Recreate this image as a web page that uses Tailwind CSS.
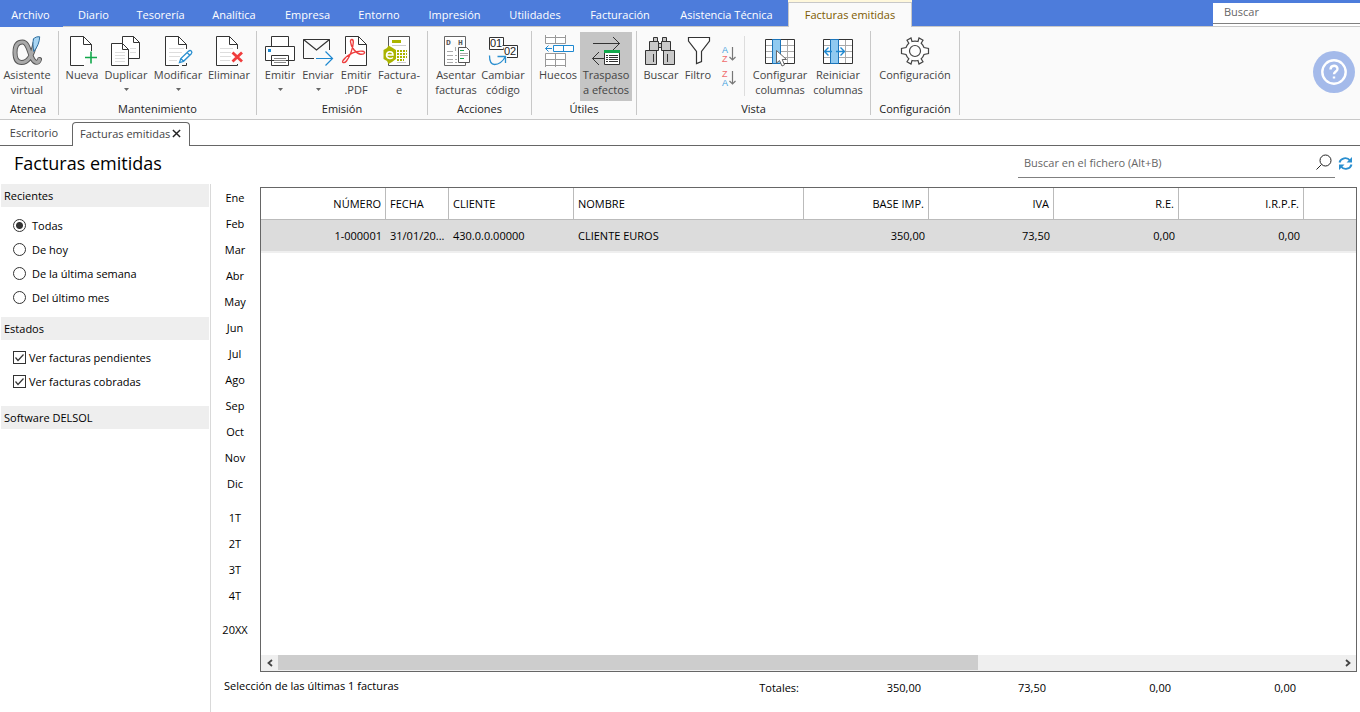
<!DOCTYPE html>
<html lang="es">
<head>
<meta charset="utf-8">
<meta name="viewport" content="width=device-width, initial-scale=1">
<title>Facturas emitidas</title>
<script src="https://cdn.jsdelivr.net/npm/@tailwindcss/browser@4"></script>
</head>
<body class="flex min-h-screen flex-col bg-white font-['Open_Sans','Noto_Sans',sans-serif] text-[11px] leading-[15px] text-black">

<header>
  <!-- Menu bar -->
  <div class="flex h-[27px] bg-[#4d7cdb] text-white">
    <button class="w-[63px] pr-[2px] pt-px">Archivo</button>
    <nav class="flex flex-1 border-b border-[#c8c8c8]">
      <button class="w-[61px] pt-[2px]">Diario</button>
      <button class="w-[73px] pt-[2px]">Tesorería</button>
      <button class="w-[74px] pt-[2px]">Analítica</button>
      <button class="w-[73px] pt-[2px]">Empresa</button>
      <button class="w-[70px] pt-[2px]">Entorno</button>
      <button class="w-[81px] pt-[2px]">Impresión</button>
      <button class="w-[80px] pt-[2px]">Utilidades</button>
      <button class="w-[90px] pt-[2px]">Facturación</button>
      <button class="w-[123px] pt-[2px]">Asistencia Técnica</button>
      <div class="h-[27px] w-[124px] bg-[#fff8dc] pt-[2px]">
        <button class="h-[25px] w-full border border-b-0 border-[#c8c8c8] bg-[#fafafa] pb-[2px] text-[#7d5a00]">Facturas emitidas</button>
      </div>
    </nav>
    <div class="w-[147px] border-b border-[#c8c8c8] pt-[3px]">
      <div class="h-[23px] bg-white">
        <input type="text" aria-label="Buscar" placeholder="Buscar" class="block h-[21px] w-full border-b border-[#808080] pl-[11px] pb-1 outline-none placeholder:text-[#666]">
      </div>
    </div>
  </div>

  <!-- Ribbon -->
  <div class="flex h-[93px] items-start border-b border-[#c8c8c8] bg-[#fafafa] text-[#444]">
    <section class="mt-1 flex h-[84px] w-[59px] flex-col justify-between border-r border-[#c8c8c8]">
      <div class="flex pt-px">
        <button class="flex h-[69px] w-[54px] flex-col items-center pt-[3px]">
          <svg class="size-8 shrink-0" viewBox="0 0 32 32" fill="none" stroke-linecap="round"><path d="M24 8C22 18 18 27.500 10.500 27.500C6 27.500 4 23.500 4 17.500C4 11 6.500 7 11.500 7C19 7 18.500 26 25 27.200C26.500 27.500 28 26.500 28.500 24.500" stroke="#555" stroke-width="5"/><path d="M24 8C22 18 18 27.500 10.500 27.500C6 27.500 4 23.500 4 17.500C4 11 6.500 7 11.500 7C19 7 18.500 26 25 27.200C26.500 27.500 28 26.500 28.500 24.500" stroke="#a9a9a9" stroke-width="3.200"/><path d="M22.500 4C24 2 26.500 1.500 28.700 1.800C28.500 7 26.500 12 22.800 16.500C22 12 21.500 7 22.500 4Z" fill="#a9d6f3" stroke="#2f6f9f"/></svg>
          <span>Asistente<br>virtual</span>
        </button>
      </div>
      <h2 class="-mb-px pr-[2px] text-center text-[#222]">Atenea</h2>
    </section>

    <section class="mt-1 flex h-[84px] w-[198px] flex-col justify-between border-r border-[#c8c8c8]">
      <div class="flex pl-[3px] pt-px">
        <button class="flex h-[69px] w-10 flex-col items-center pt-[3px]">
          <svg class="size-8 shrink-0" viewBox="0 0 32 32" fill="none" stroke="#333"><path d="M18 30.500H4.500V1.500H17.500L25.500 9.500V16" fill="#fff"/><path d="M17.500 1.500V9.500H25.500"/><path d="M25 16.500V28.500M19 22.500H31" stroke="#12a84b" stroke-width="1.600"/></svg>
          <span>Nueva</span>
        </button>
        <button class="flex h-[69px] w-12 flex-col items-center pt-[3px]">
          <svg class="size-8 shrink-0" viewBox="0 0 32 32" fill="none" stroke="#333"><path d="M12.500 1.500H23.500L29.500 7.500V23.500H12.500Z" fill="#fff"/><path d="M23.500 1.500V7.500H29.500"/><path d="M20 13.500H26M20 17.500H26" stroke="#ddd"/><path d="M1.500 8.500H12.500L18.500 14.500V30.500H1.500Z" fill="#fff"/><path d="M12.500 8.500V14.500H18.500"/><path d="M5 17.500H15M5 20.500H15M5 23.500H15M5 26.500H15" stroke="#ddd"/></svg>
          <span>Duplicar</span>
          <svg class="mt-[6px] h-[3px] w-[5px]" viewBox="0 0 5 3" fill="#666"><path d="M0 0H5L2.500 3Z"/></svg>
        </button>
        <button class="flex h-[69px] w-14 flex-col items-center pt-[3px]">
          <svg class="size-8 shrink-0" viewBox="0 0 32 32" fill="none" stroke="#333"><path d="M17 30.500H3.500V1.500H16.500L24.500 9.500V14" fill="#fff"/><path d="M16.500 1.500V9.500H24.500M20 30.500H24.500V28"/><path d="M7 13.500H22M7 17.500H20M7 21.500H18M7 25.500H15" stroke="#ddd"/><path d="M17.500 27.500L18.800 23.500L26.500 16.200C28.500 14.500 31 16.500 29.300 18.700L21.500 26.300ZM18.800 23.500L21.500 26.300M25 17.600L27.900 20.200" stroke="#2a8fd0" stroke-width="1.300" fill="#fff"/></svg>
          <span>Modificar</span>
          <svg class="mt-[6px] h-[3px] w-[5px]" viewBox="0 0 5 3" fill="#666"><path d="M0 0H5L2.500 3Z"/></svg>
        </button>
        <button class="flex h-[69px] w-[46px] flex-col items-center pt-[3px]">
          <svg class="size-8 shrink-0" viewBox="0 0 32 32" fill="none" stroke="#333"><path d="M18 30.500H3.500V1.500H16.500L24.500 9.500V14" fill="#fff"/><path d="M16.500 1.500V9.500H24.500M18 30.500H24.500V29"/><path d="M7 13.500H20M7 17.500H18M7 21.500H18M7 25.500H17" stroke="#ddd"/><path d="M19.500 17.500L29 26.500M29 17.500L19.500 26.500" stroke="#f03c3c" stroke-width="2.800"/></svg>
          <span>Eliminar</span>
        </button>
      </div>
      <h2 class="-mb-px text-center text-[#222]">Mantenimiento</h2>
    </section>

    <section class="mt-1 flex h-[84px] w-[171px] flex-col justify-between border-r border-[#c8c8c8]">
      <div class="flex pl-1 pt-px">
        <button class="flex h-[69px] w-[38px] flex-col items-center pt-[3px]">
          <svg class="size-8 shrink-0" viewBox="0 0 32 32" fill="#fff" stroke="#333"><path d="M7.500 1.500H24.500V11.500H7.500ZM1.500 11.500H30.500V25.500H1.500ZM7.500 20.500H24.500V30.500H7.500Z"/><path d="M10 23.500H22M10 25.500H22M10 27.500H22" stroke="#888"/><path d="M4 14H7V17H4Z" fill="#1e88d0" stroke="none"/></svg>
          <span>Emitir</span>
          <svg class="mt-[6px] h-[3px] w-[5px]" viewBox="0 0 5 3" fill="#666"><path d="M0 0H5L2.500 3Z"/></svg>
        </button>
        <button class="flex h-[69px] w-[38px] flex-col items-center pt-[3px]">
          <svg class="size-8 shrink-0" viewBox="0 0 32 32" fill="none" stroke="#333"><path d="M12 23.500H1.500V4.500H27.500V15"/><path d="M1.500 4.500L14.500 15L27.500 4.500" stroke-width="1.200"/><path d="M14 23.500H30M23.500 16.500L30.500 23.500L23.500 30.500" stroke="#1e88d0" stroke-width="1.200"/></svg>
          <span>Enviar</span>
          <svg class="mt-[6px] h-[3px] w-[5px]" viewBox="0 0 5 3" fill="#666"><path d="M0 0H5L2.500 3Z"/></svg>
        </button>
        <button class="flex h-[69px] w-[38px] flex-col items-center pt-[3px]">
          <svg class="size-8 shrink-0" viewBox="0 0 32 32" fill="none" stroke="#333"><path d="M5.500 19V1.500H18.500L26.500 9.500V30.500H9" fill="#fff"/><path d="M18.500 1.500V9.500H26.500"/><path d="M3 25.500C1.500 28 4.500 28.500 6.500 26C10 21.500 13 13 13.300 7.500C13.500 3.800 10.300 3.500 10.500 6.800C10.800 12 16 18.500 20.500 19.200C25 19.700 26 16.500 22.500 16.200C17 15.700 8.500 18 3 25.500Z" stroke="#ee3f3f" stroke-width="1.400"/></svg>
          <span>Emitir<br>.PDF</span>
        </button>
        <button class="flex h-[69px] w-12 flex-col items-center pt-[3px]">
          <svg class="size-8 shrink-0" viewBox="0 0 32 32" fill="none"><path d="M5.500 1.500H26.500V30.500H5.500Z" fill="#fff" stroke="#555"/><path d="M9 10.500H23M14 27.500H23" stroke="#ccc"/><path d="M9 5H18V8H9Z" fill="#aab400"/><path d="M5.500 10.500L9 12.500L13 15V24L9 27L5.500 29L4 26L.5 24V15L4 13Z" fill="#aab400"/><path d="M3.500 20H10C10 16 4 15.500 3.500 20C3.500 23.500 7.500 24.500 10 22.500" stroke="#fff" stroke-width="1.500"/><path d="M14 16H24M14 19H24M14 22H24M14 25H21" stroke="#aab400" stroke-width="2" stroke-dasharray="2 1"/></svg>
          <span>Factura-<br>e</span>
        </button>
      </div>
      <h2 class="-mb-px text-center text-[#222]">Emisión</h2>
    </section>

    <section class="mt-1 flex h-[84px] w-[104px] flex-col justify-between border-r border-[#c8c8c8]">
      <div class="flex pl-[3px] pt-px">
        <button class="flex h-[69px] w-[50px] flex-col items-center pt-[3px]">
          <svg class="size-8 shrink-0" viewBox="0 0 32 32" fill="none"><path d="M4.500 1.500H25.500V12M25.500 28V30.500H4.500V1.500" fill="#fff" stroke="#666"/><text x="6" y="10" font-family="Liberation Mono, monospace" font-size="8" font-weight="bold" fill="#555">D</text><text x="18" y="10" font-family="Liberation Mono, monospace" font-size="8" font-weight="bold" fill="#555">H</text><path d="M7 16.500H13M7 20.500H13M7 24.500H13M7 27.500H13M15 20.500H17M15 24.500H17M15 27.500H17" stroke="#aaa"/><path d="M15.500 12V16" stroke="#aaa"/><path d="M18.500 12.500H26.500L29.500 15.500V27.500H18.500Z" fill="#fff" stroke="#555"/><path d="M20 15.500H24M20 23.500H24" stroke="#12a84b"/><path d="M20 18.500H28M20 20.500H28" stroke="#aaa"/></svg>
          <span>Asentar<br>facturas</span>
        </button>
        <button class="flex h-[69px] w-11 flex-col items-center pt-[3px]">
          <svg class="size-8 shrink-0" viewBox="0 0 32 32" fill="none"><path d="M2.500 2.500H16.500V14.500H2.500Z" fill="#fff" stroke="#333"/><text x="3" y="12" font-family="Liberation Sans, sans-serif" font-size="11" fill="#222">01</text><path d="M15.500 10.500H30.500V22.500H20" fill="#fff" stroke="#333"/><text x="17" y="20" font-family="Liberation Sans, sans-serif" font-size="11" fill="#222">02</text><path d="M2.500 20.500C2.500 26 4 29.500 7.500 29.500C12 29.500 16 26 18.500 21.500M10.500 21.500H18.500V28" stroke="#2a8fd0" stroke-width="1.300"/></svg>
          <span>Cambiar<br>código</span>
        </button>
      </div>
      <h2 class="-mb-px text-center text-[#222]">Acciones</h2>
    </section>

    <section class="mt-1 flex h-[84px] w-[105px] flex-col justify-between border-r border-[#c8c8c8]">
      <div class="flex pl-1 pt-px">
        <button class="flex h-[69px] w-11 flex-col items-center pt-[3px]">
          <svg class="size-8 shrink-0" viewBox="0 0 32 32" fill="none" stroke="#999"><path d="M3.500 0V8.500H23.500V0M13.500 0V8.500M3.500 2.500H23.500M3.500 32V18.500H23.500V32M13.500 18.500V32M3.500 24.500H23.500M3.500 30.500H23.500" fill="#fff"/><path d="M11.500 10.500H31.500V16.500H11.500ZM21.500 10.500V16.500" fill="#fff" stroke="#1e88d0"/><path d="M3.500 13.500H10M6.500 10.500L3.500 13.500L6.500 16.500" stroke="#1e88d0"/></svg>
          <span>Huecos</span>
        </button>
        <button class="flex h-[69px] w-[52px] flex-col items-center bg-[#c5c5c5] pt-[3px]">
          <svg class="size-8 shrink-0" viewBox="0 0 32 32" fill="none" stroke="#333"><path d="M3 8.500H30M23 2L29.500 8.500L23 15M2.500 23.500H14M9 17L2.500 23.500L9 30"/><path d="M14.500 16.500H29.500V29.500H14.500Z" fill="#fff"/><path d="M14 16.500H30" stroke="#12a84b" stroke-width="3"/><path d="M16 20.500H18M19 20.500H28M16 22.500H18M19 22.500H28M16 24.500H18M19 24.500H28M16 26.500H18M19 26.500H28"/></svg>
          <span>Traspaso<br>a efectos</span>
        </button>
      </div>
      <h2 class="-mb-px text-center text-[#222]">Útiles</h2>
    </section>

    <section class="mt-1 flex h-[84px] w-[234px] flex-col justify-between border-r border-[#c8c8c8]">
      <div class="flex pl-1 pt-px">
        <button class="flex h-[69px] w-10 flex-col items-center pt-[3px]">
          <svg class="size-8 shrink-0" viewBox="0 0 32 32" fill="#c9c9c9" stroke="#333"><path d="M8.500 2.500H12.500V6.500H8.500ZM17.500 2.500H21.500V6.500H17.500ZM4.500 6.500H13.500V15.500H4.500ZM16.500 6.500H25.500V15.500H16.500ZM.5 15.500H11.500V29.500H.5ZM18.500 15.500H29.500V29.500H18.500ZM13.500 8.500H16.500V12.500H13.500Z"/><path d="M8.500 19V27M22.500 19V27"/></svg>
          <span>Buscar</span>
        </button>
        <button class="flex h-[69px] w-[34px] flex-col items-center pt-[3px]">
          <svg class="size-8 shrink-0" viewBox="0 0 32 32" fill="#fff" stroke="#333"><path d="M6.500 2.500H27.500V6L19.500 16.500V26.500L14.500 28.500V16.500L6.500 6Z" stroke-width="1.200"/></svg>
          <span>Filtro</span>
        </button>
        <div class="mt-1 flex h-[60px] w-[30px] flex-col items-center justify-between border-r border-[#ddd] pb-2 pt-[10px]">
          <button aria-label="Orden ascendente"><svg class="block size-[18px]" viewBox="0 0 18 18" fill="none"><text x="1" y="7" font-family="Liberation Sans, sans-serif" font-size="9" fill="#3f9fdd">A</text><text x="1" y="16" font-family="Liberation Sans, sans-serif" font-size="9" fill="#f06c6c">Z</text><path d="M11.500 1V14M8.500 11L11.500 14L14.500 11" stroke="#777" stroke-width="1.200"/></svg></button>
          <button aria-label="Orden descendente"><svg class="block size-[18px]" viewBox="0 0 18 18" fill="none"><text x="1" y="7" font-family="Liberation Sans, sans-serif" font-size="9" fill="#f06c6c">Z</text><text x="1" y="16" font-family="Liberation Sans, sans-serif" font-size="9" fill="#3f9fdd">A</text><path d="M11.500 1V14M8.500 11L11.500 14L14.500 11" stroke="#777" stroke-width="1.200"/></svg></button>
        </div>
        <button class="ml-1 flex h-[69px] w-[62px] flex-col items-center pt-[3px]">
          <svg class="size-8 shrink-0" viewBox="0 0 32 32" fill="none"><path d="M1.500 4.500H30.500V28.500H1.500Z" fill="#fff"/><path d="M1.500 10.500H30.500M1.500 16.500H30.500M1.500 22.500H30.500M23.500 4.500V28.500" stroke="#aaa"/><path d="M1.500 4.500H30.500V28.500H1.500Z" stroke="#333"/><path d="M8.500 4.500H16.500V28.500H8.500Z" fill="#90caf0" stroke="#1b75bb"/><path d="M12.500 15.500V28L15.500 25.500L18 31L20.500 29.800L18.200 24.500H22.500Z" fill="#fff" stroke="#666"/></svg>
          <span>Configurar<br>columnas</span>
        </button>
        <button class="flex h-[69px] w-[54px] flex-col items-center pt-[3px]">
          <svg class="size-8 shrink-0" viewBox="0 0 32 32" fill="none"><path d="M1.500 4.500H30.500V28.500H1.500Z" fill="#fff"/><path d="M1.500 10.500H30.500M1.500 16.500H30.500M1.500 22.500H30.500M23.500 4.500V28.500" stroke="#aaa"/><path d="M1.500 4.500H30.500V28.500H1.500Z" stroke="#333"/><path d="M8.500 4.500H16.500V28.500H8.500Z" fill="#90caf0" stroke="#1b75bb"/><path d="M2.500 16.500H10M6.500 12.500L2.500 16.500L6.500 20.500M14 16.500H22.500M18.500 12.500L22.500 16.500L18.500 20.500" stroke="#1e88d0" stroke-width="1.400"/></svg>
          <span>Reiniciar<br>columnas</span>
        </button>
      </div>
      <h2 class="-mb-px text-center text-[#222]">Vista</h2>
    </section>

    <section class="mt-1 flex h-[84px] w-[89px] flex-col justify-between border-r border-[#c8c8c8]">
      <div class="flex pl-1 pt-px">
        <button class="flex h-[69px] w-20 flex-col items-center pt-[3px]">
          <svg class="size-8 shrink-0" viewBox="0 0 32 32" fill="#fff" stroke="#444" stroke-width="1.200"><path d="M13 6.500L12 3L8 5.200L9.800 8.200C8.500 9.300 7.700 10.600 7 12.500L2.500 13.500V18.500L7 19.500C7.700 21.400 8.500 22.700 9.800 23.800L8 26.800L12 29L13 25.500C15 26.100 17 26.100 19 25.500L20 29L24 26.800L22.200 23.800C23.500 22.700 24.300 21.400 25 19.500L29.500 18.500V13.500L25 12.500C24.300 10.600 23.500 9.300 22.200 8.200L24 5.200L20 3L19 6.500C17 5.900 15 5.900 13 6.500Z"/><circle cx="16" cy="16" r="5.500"/></svg>
          <span>Configuración</span>
        </button>
      </div>
      <h2 class="-mb-px text-center text-[#222]">Configuración</h2>
    </section>

    <button aria-label="Ayuda" class="ml-auto mr-[5px] mt-6 flex size-[42px] items-center justify-center rounded-full bg-[#a4baea]">
      <svg class="size-7" viewBox="0 0 28 28" fill="none" stroke="#fff"><circle cx="14" cy="14" r="11.700" stroke-width="2.400"/><path d="M10.500 11.500C10.500 6.500 17.500 6.500 17.500 11C17.500 13.500 14 13.500 14 16.200M14 18.500V20.500" stroke-width="2.400"/></svg>
    </button>
  </div>

  <!-- Document tabs -->
  <div class="flex h-[26px] text-[#444]">
    <button class="w-[72px] border-b border-[#666] pr-1">Escritorio</button>
    <div class="mt-[2px] flex w-[118px] items-center gap-[2px] rounded-t border border-b-0 border-[#666] pb-[2px] pl-[7px]">
      <button class="whitespace-nowrap">Facturas emitidas</button>
      <button aria-label="Cerrar"><svg class="block size-[9px]" viewBox="0 0 10 10" stroke="#222" stroke-width="1.600"><path d="M1 1L9 9M9 1L1 9"/></svg></button>
    </div>
    <div class="flex-1 border-b border-[#666]"></div>
  </div>
</header>

<!-- Title and file search -->
<div class="flex h-[38px] items-start justify-between">
  <h1 class="pl-[14px] pt-[5px] text-[18px] leading-[24px]">Facturas emitidas</h1>
  <div class="flex pr-[7px]">
    <label class="flex h-8 w-[317px] items-center border-b border-[#808080] pr-[3px] pl-[6px]">
      <input type="text" aria-label="Buscar en el fichero" placeholder="Buscar en el fichero (Alt+B)" class="min-w-0 flex-1 pt-[2px] outline-none placeholder:text-[#666]">
      <svg class="mt-px size-4" viewBox="0 0 16 16" fill="none" stroke="#222"><circle cx="9.500" cy="6.500" r="5.500"/><path d="M5.500 10.500L.5 15.500"/></svg>
    </label>
    <button aria-label="Actualizar" class="ml-[3px] pt-[2px]"><svg class="block size-[15px]" viewBox="0 0 15 15" fill="none" stroke="#2a8fd0" stroke-width="1.900"><path d="M1.500 6.500C2.500 2 9 .5 12 4.500M13.500 8.500C12.500 13 6 14.500 3 10.500"/><path d="M14 1V6.500H8.500ZM1 14V8.500H6.500Z" fill="#2a8fd0" stroke="none"/></svg></button>
  </div>
</div>

<main class="flex flex-1">
  <!-- Filters -->
  <aside class="w-[211px] border-r border-[#d9d9d9] pl-px pr-px">
    <h2 class="bg-[#eee] py-1 pl-[3px]">Recientes</h2>
    <div class="flex flex-col pl-3 pt-[6px]">
      <label class="flex h-6 items-center gap-[6px]"><input type="radio" name="r" checked class="size-[13px] appearance-none rounded-full border border-[#333] checked:bg-[radial-gradient(circle,#333_0_3px,#fff_4px)]">Todas</label>
      <label class="flex h-6 items-center gap-[6px]"><input type="radio" name="r" class="size-[13px] appearance-none rounded-full border border-[#333]">De hoy</label>
      <label class="flex h-6 items-center gap-[6px]"><input type="radio" name="r" class="size-[13px] appearance-none rounded-full border border-[#333]">De la última semana</label>
      <label class="flex h-6 items-center gap-[6px]"><input type="radio" name="r" class="size-[13px] appearance-none rounded-full border border-[#333]">Del último mes</label>
    </div>
    <h2 class="mt-2 bg-[#eee] py-1 pl-[3px]">Estados</h2>
    <div class="flex flex-col pl-3 pt-[5px]">
      <label class="flex h-6 items-center gap-[3px]"><span class="grid size-[13px]"><input type="checkbox" checked class="col-start-1 row-start-1 size-[13px] appearance-none border border-[#333]"><svg class="pointer-events-none col-start-1 row-start-1 size-[13px]" viewBox="0 0 13 13" fill="none" stroke="#333" stroke-width="1.200"><path d="M2.500 6.500L5 9.500L10.500 3.500"/></svg></span>Ver facturas pendientes</label>
      <label class="flex h-6 items-center gap-[3px]"><span class="grid size-[13px]"><input type="checkbox" checked class="col-start-1 row-start-1 size-[13px] appearance-none border border-[#333]"><svg class="pointer-events-none col-start-1 row-start-1 size-[13px]" viewBox="0 0 13 13" fill="none" stroke="#333" stroke-width="1.200"><path d="M2.500 6.500L5 9.500L10.500 3.500"/></svg></span>Ver facturas cobradas</label>
    </div>
    <h2 class="mt-[13px] bg-[#eee] py-1 pl-[3px]">Software DELSOL</h2>
  </aside>

  <div class="flex flex-1 flex-col">
    <div class="flex flex-1 pr-[3px]">
      <!-- Periods -->
      <div class="flex w-[49px] flex-col pr-px [&>button]:h-[26px]">
        <button>Ene</button><button>Feb</button><button>Mar</button><button>Abr</button><button>May</button><button>Jun</button><button>Jul</button><button>Ago</button><button>Sep</button><button>Oct</button><button>Nov</button><button>Dic</button>
        <button class="mt-2">1T</button><button>2T</button><button>3T</button><button>4T</button>
        <button class="mt-2">20XX</button>
      </div>
      <!-- Invoices -->
      <div class="mt-[3px] flex flex-1 flex-col border border-[#666]">
        <table class="w-full table-fixed border-separate border-spacing-0">
          <colgroup><col class="w-[125px]"><col class="w-[63px]"><col class="w-[125px]"><col class="w-[230px]"><col class="w-[125px]"><col class="w-[125px]"><col class="w-[125px]"><col class="w-[125px]"><col></colgroup>
          <thead>
            <tr class="h-8 [&>*]:border-b [&>*]:border-[#bbb] [&>th]:border-r [&>th]:px-1 [&>th]:font-normal">
              <th class="text-right">NÚMERO</th><th class="text-left">FECHA</th><th class="text-left">CLIENTE</th><th class="text-left">NOMBRE</th><th class="text-right">BASE IMP.</th><th class="text-right">IVA</th><th class="text-right">R.E.</th><th class="text-right">I.R.P.F.</th><td></td>
            </tr>
          </thead>
          <tbody>
            <tr class="h-[33px] bg-[#dcdcdc] [&>td]:border-b-2 [&>td]:border-[#efefef] [&>td]:px-1">
              <td class="text-right">1-000001</td><td class="whitespace-nowrap">31/01/20...</td><td>430.0.0.00000</td><td>CLIENTE EUROS</td><td class="text-right">350,00</td><td class="text-right">73,50</td><td class="text-right">0,00</td><td class="text-right">0,00</td><td></td>
            </tr>
          </tbody>
        </table>
        <div class="mt-auto flex h-4 items-start bg-[#efefef]">
          <button aria-label="Izquierda" class="flex h-[15px] w-[17px] items-center justify-center"><svg class="h-2 w-[6px]" viewBox="0 0 6 8" fill="none" stroke="#444" stroke-width="1.800"><path d="M5 1L1.500 4L5 7"/></svg></button>
          <div class="h-[15px] flex-1"><div class="h-full w-[66%] bg-[#cdcdcd]"></div></div>
          <button aria-label="Derecha" class="flex h-[15px] w-[17px] items-center justify-center"><svg class="h-2 w-[6px]" viewBox="0 0 6 8" fill="none" stroke="#444" stroke-width="1.800"><path d="M1 1L4.500 4L1 7"/></svg></button>
        </div>
      </div>
    </div>
    <footer class="flex h-10 pl-[13px] pt-[6px]">
      <p class="w-[450px]">Selección de las últimas 1 facturas</p>
      <div class="flex pt-[2px] text-right"><span class="w-[125px]">Totales:</span><span class="w-[122px]">350,00</span><span class="w-[125px]">73,50</span><span class="w-[125px]">0,00</span><span class="w-[125px]">0,00</span></div>
    </footer>
  </div>
</main>
</body>
</html>
